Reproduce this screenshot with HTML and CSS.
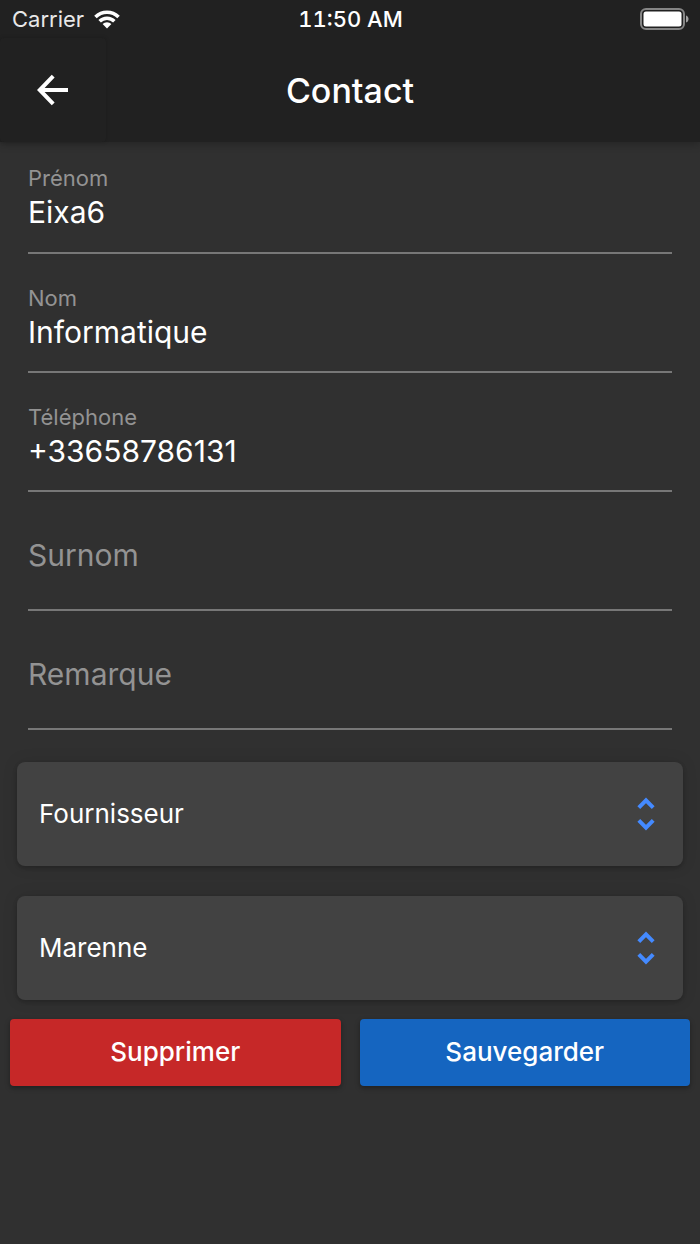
FILE: index.html
```html
<!DOCTYPE html>
<html lang="fr">
<head>
<meta charset="utf-8">
<meta name="viewport" content="width=device-width, initial-scale=1">
<title>Contact</title>
<link rel="stylesheet" href="styles.css">
</head>
<body>
<header class="header">
  <div class="status">
    <div class="carrier">
      <span>Carrier</span>
      <svg class="wifi" width="28" height="20" viewBox="0 0 28 20" aria-hidden="true">
        <path d="M1.2 6.7a18.2 18.2 0 0 1 25.6 0l-2.5 2.6a14.6 14.6 0 0 0-20.6 0z"/>
        <path d="M5.4 11a12.2 12.2 0 0 1 17.2 0l-2.5 2.5a8.7 8.7 0 0 0-12.2 0z"/>
        <path d="M9.6 15.1a6.3 6.3 0 0 1 8.8 0L14 19.5z"/>
      </svg>
    </div>
    <time class="clock">11:50 AM</time>
    <svg class="battery" width="49" height="22" viewBox="0 0 49 22" aria-hidden="true">
      <rect x="1" y="1" width="43" height="20" rx="5" fill="none" stroke="#858585" stroke-width="2"/>
      <rect x="3.5" y="3.5" width="38" height="15" rx="2.5" fill="#fff"/>
      <path d="M46 7.5c3.4 1 3.4 6 0 7z" fill="#a0a0a0"/>
    </svg>
  </div>
  <div class="toolbar">
    <button class="back" type="button" aria-label="Retour">
      <svg width="32" height="32" viewBox="0 0 32 32" aria-hidden="true">
        <path d="M31 16H4M16.2 2.2L2.8 16l13.4 13.8" fill="none" stroke="#fff" stroke-width="4"/>
      </svg>
    </button>
    <h1 class="title">Contact</h1>
  </div>
</header>
<main>
  <form class="form">
    <div class="fields">
      <div class="field">
        <label class="label" for="prenom">Prénom</label>
        <input class="input" id="prenom" type="text" value="Eixa6">
      </div>
      <div class="field">
        <label class="label" for="nom">Nom</label>
        <input class="input" id="nom" type="text" value="Informatique">
      </div>
      <div class="field">
        <label class="label" for="telephone">Téléphone</label>
        <input class="input" id="telephone" type="tel" value="+33658786131">
      </div>
      <div class="field empty">
        <input class="input" type="text" placeholder="Surnom" aria-label="Surnom">
      </div>
      <div class="field empty">
        <input class="input" type="text" placeholder="Remarque" aria-label="Remarque">
      </div>
    </div>
    <div class="cards">
      <div class="card">
        <select class="select" aria-label="Type de contact"><option>Fournisseur</option></select>
        <svg class="chevrons" width="18" height="34" viewBox="0 0 18 34" aria-hidden="true">
          <path d="M1.8 10.6L9 3.4l7.2 7.2M1.8 23.4L9 30.6l7.2-7.2"/>
        </svg>
      </div>
      <div class="card">
        <select class="select" aria-label="Lieu"><option>Marenne</option></select>
        <svg class="chevrons" width="18" height="34" viewBox="0 0 18 34" aria-hidden="true">
          <path d="M1.8 10.6L9 3.4l7.2 7.2M1.8 23.4L9 30.6l7.2-7.2"/>
        </svg>
      </div>
    </div>
    <div class="actions">
      <button class="button delete" type="button">Supprimer</button>
      <button class="button save" type="submit">Sauvegarder</button>
    </div>
  </form>
</main>
</body>
</html>
```
FILE: styles.css
```css
* { box-sizing: border-box; }

body {
  margin: 0;
  min-height: 100vh;
  background: #303030;
  color: #fff;
  font-family: Inter, Roboto, sans-serif;
}

button, input, select { font-family: inherit; }

.header {
  background: #212121;
  box-shadow: 0 2px 8px rgba(0, 0, 0, 0.25);
}

.status {
  display: grid;
  grid-template-columns: 1fr auto 1fr;
  align-items: center;
  height: 38px;
  padding: 0 11px 0 12px;
  font-size: 22px;
}

.carrier {
  display: flex;
  align-items: center;
  gap: 9px;
  color: #e8e8e8;
}

.wifi { fill: #fff; }

.clock {
  font-weight: 500;
  font-variant-numeric: tabular-nums;
}

.battery { justify-self: end; }

.toolbar {
  display: grid;
  grid-template-columns: 106px 1fr 106px;
  height: 104px;
}

.back {
  display: flex;
  align-items: center;
  justify-content: center;
  padding: 0;
  border: 0;
  border-radius: 4px;
  background: #212121;
  box-shadow: 0 0 4px rgba(0, 0, 0, 0.2);
}

.title {
  align-self: center;
  margin: 0;
  text-align: center;
  font-size: 34px;
  font-weight: 500;
}

.fields { padding: 0 28px; }

.field {
  display: flex;
  flex-direction: column;
  height: 119px;
  padding-top: 30px;
  border-bottom: 2px solid #777;
}

.field:first-child {
  height: 112px;
  padding-top: 22px;
}

.field.empty {
  justify-content: center;
  padding-top: 8px;
}

.label {
  color: #939393;
  font-size: 22px;
  line-height: 28px;
}

.input {
  width: 100%;
  height: 40px;
  padding: 0;
  border: 0;
  outline: 0;
  background: none;
  color: #fff;
  font-size: 30px;
}

.input::placeholder {
  color: #939393;
  opacity: 1;
}

.cards {
  display: grid;
  gap: 30px;
  padding: 32px 17px 19px;
}

.card {
  display: grid;
  align-items: center;
  border-radius: 8px;
  background: #424242;
  box-shadow: 0 2px 4px rgba(0, 0, 0, 0.2), 0 0 16px rgba(0, 0, 0, 0.1);
}

.select, .chevrons { grid-area: 1 / 1; }

.select {
  width: 100%;
  height: 104px;
  padding: 0 64px 2px 22px;
  border: 0;
  outline: 0;
  appearance: none;
  background: none;
  color: #fff;
  font-size: 26px;
}

.chevrons {
  justify-self: end;
  margin-right: 28px;
  fill: none;
  stroke: #448aff;
  stroke-width: 4;
  pointer-events: none;
}

.actions {
  display: grid;
  grid-template-columns: 1fr 1fr;
  gap: 19px;
  padding: 0 10px;
}

.button {
  height: 67px;
  padding: 0 0 2px;
  border: 0;
  border-radius: 4px;
  color: #fff;
  font-size: 26px;
  font-weight: 500;
  box-shadow: 0 2px 5px rgba(0, 0, 0, 0.35);
}

.delete { background: #c62828; }
.save { background: #1565c0; }
```
